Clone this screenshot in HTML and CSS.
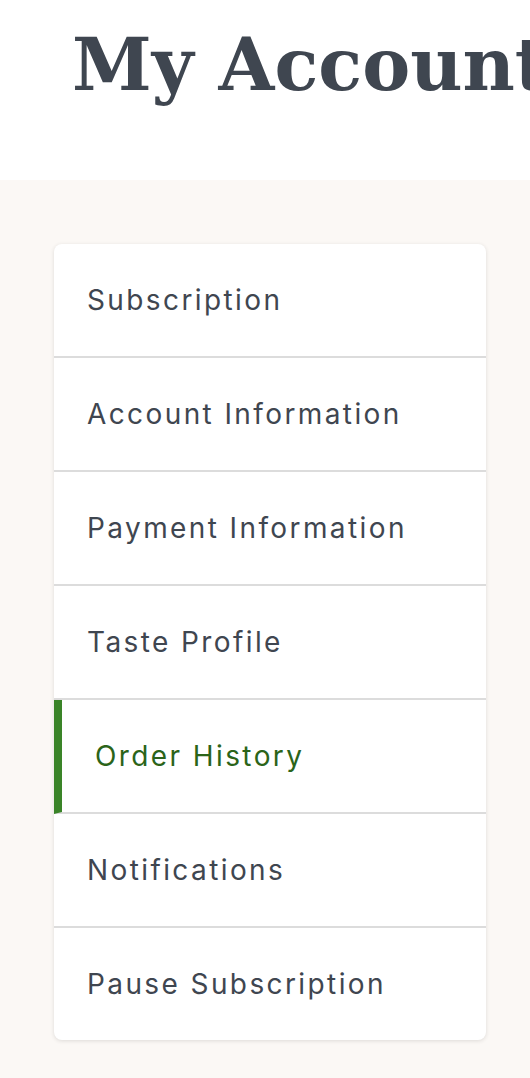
FILE: index.html
```html
<!DOCTYPE html>
<html lang="en">

<head>
    <meta charset="UTF-8">
    <meta name="viewport" content="width=device-width, initial-scale=1.0">
    <title>My Account</title>
    <link rel="stylesheet" href="styles.css">
</head>

<body>
    <header class="page-header">
        <h1>My Account</h1>
    </header>

    <main class="account">
        <nav class="account-nav">
            <a href="#" class="nav-item">Subscription</a>
            <a href="#" class="nav-item">Account Information</a>
            <a href="#" class="nav-item">Payment Information</a>
            <a href="#" class="nav-item">Taste Profile</a>
            <a href="#" class="nav-item active">Order History</a>
            <a href="#" class="nav-item">Notifications</a>
            <a href="#" class="nav-item">Pause Subscription</a>
        </nav>
    </main>
</body>

</html>
```

FILE: styles.css
```css
* {
    box-sizing: border-box;
    margin: 0;
    padding: 0;
}

body {
    font-family: Inter, "Open Sans", Arial, sans-serif;
    background-color: #fbf8f5;
    color: #3f4650;
    overflow-x: hidden;
}

.page-header {
    background-color: #fff;
    height: 180px;
    padding: 22px 0 0 72px;
    white-space: nowrap;
}

.page-header h1 {
    font-family: "DejaVu Serif", Georgia, serif;
    font-size: 72px;
    font-weight: bold;
    color: #3f4650;
    line-height: 1.2;
}

.account {
    padding: 64px 44px 60px 54px;
}

.account-nav {
    display: flex;
    flex-direction: column;
    background-color: #fff;
    border-radius: 8px;
    box-shadow: 0 1px 4px rgba(0, 0, 0, 0.12);
    overflow: hidden;
}

.nav-item {
    display: flex;
    align-items: center;
    height: 114px;
    padding: 0 33px;
    border-bottom: 2px solid #dcdcdc;
    font-size: 28px;
    letter-spacing: 2.4px;
    color: #3f4650;
    text-decoration: none;
}

.nav-item:last-child {
    border-bottom: none;
    height: 112px;
}

.nav-item.active {
    border-left: 8px solid #3a8428;
    color: #2b6419;
}
```
